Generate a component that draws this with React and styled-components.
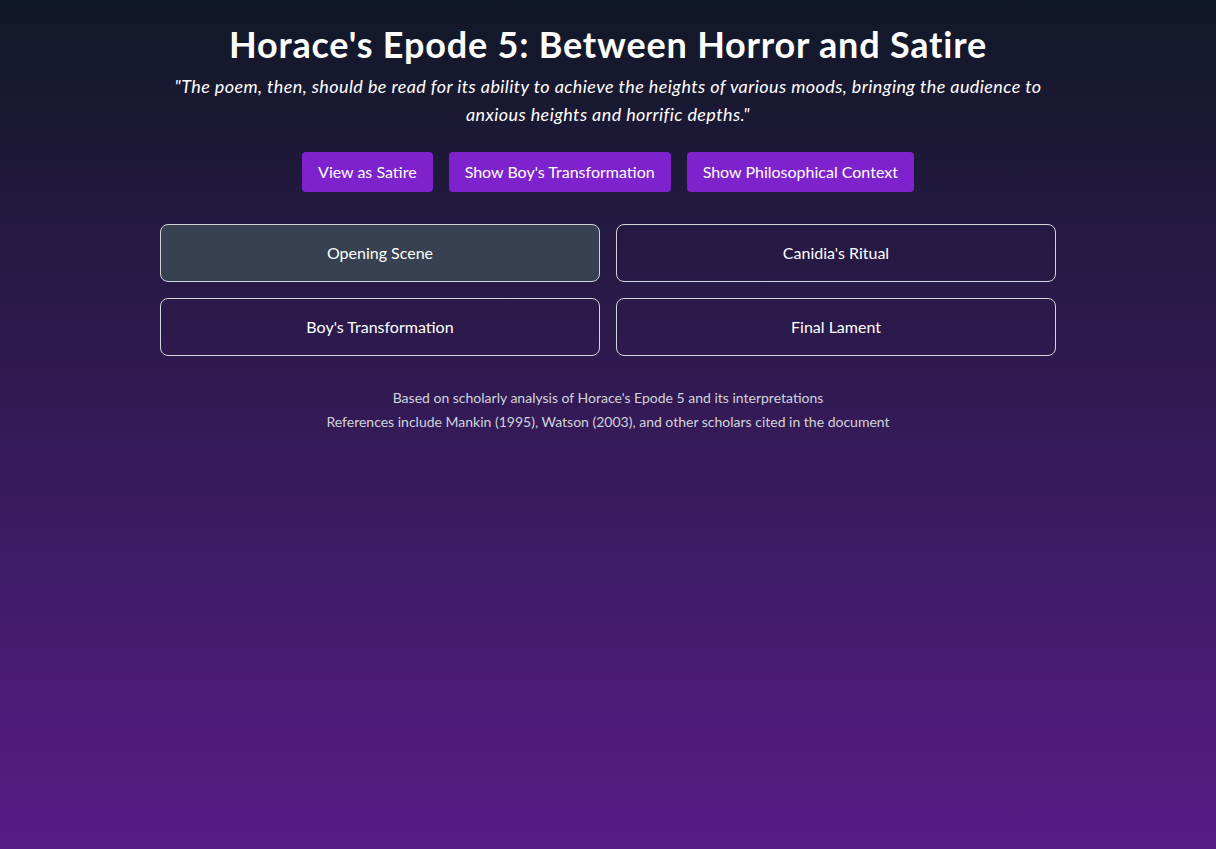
import React, { useState } from "react";
import styled, { createGlobalStyle, css } from "styled-components";

const GlobalStyle = createGlobalStyle`
  * { box-sizing: border-box; }
  html, body { margin: 0; padding: 0; }
  body {
    font-family: "Segoe UI", Lato, "Noto Sans", sans-serif;
    color: #fff;
  }
`;

const Page = styled.div`
  min-height: 100vh;
  background: linear-gradient(to bottom, #111827, #581c87);
  padding: 24px;
`;

const Container = styled.div`
  max-width: 896px;
  margin: 0 auto;
`;

const Title = styled.h1`
  margin: 0 0 8px;
  font-size: 36px;
  line-height: 40px;
  font-weight: 700;
  letter-spacing: 0.8px;
  text-align: center;
`;

const Quote = styled.p`
  margin: 0 0 24px;
  font-size: 18px;
  line-height: 28px;
  font-style: italic;
  letter-spacing: 0.4px;
  text-align: center;
`;

const Toolbar = styled.div`
  display: flex;
  justify-content: center;
  gap: 16px;
  margin-bottom: 32px;
`;

const ActionButton = styled.button`
  height: 40px;
  padding: 8px 16px;
  border: 0;
  border-radius: 4px;
  background: #7e22ce;
  color: #fff;
  font-family: inherit;
  font-size: 16px;
  line-height: 24px;
  cursor: pointer;
`;

const SceneGrid = styled.div`
  display: grid;
  grid-template-columns: 1fr 1fr;
  gap: 16px;
`;

const SceneCard = styled.button`
  padding: 16px;
  border: 1px solid #d1d5db;
  border-radius: 8px;
  background: transparent;
  color: #fff;
  font-family: inherit;
  font-size: 16px;
  line-height: 24px;
  cursor: pointer;
  ${(props) => props.active && css`
    background: #374151;
  `};
`;

const Footer = styled.div`
  margin-top: 32px;
  text-align: center;
  color: #d1d5db;
  font-size: 14px;
  line-height: 20px;
`;

const FooterLine = styled.p`
  margin: 0;
  & + & { margin-top: 4px; }
`;

const scenes = ["Opening Scene", "Canidia's Ritual", "Boy's Transformation", "Final Lament"];

function App() {
  const [active, setActive] = useState(0);

  return (
    <Page>
      <GlobalStyle />
      <Container>
        <Title>Horace's Epode 5: Between Horror and Satire</Title>
        <Quote>
          "The poem, then, should be read for its ability to achieve the heights of various moods, bringing the audience to anxious heights and horrific depths."
        </Quote>

        <Toolbar>
          <ActionButton>View as Satire</ActionButton>
          <ActionButton>Show Boy's Transformation</ActionButton>
          <ActionButton>Show Philosophical Context</ActionButton>
        </Toolbar>

        <SceneGrid>
          {scenes.map((s, i) => (
            <SceneCard key={s} active={i === active} onClick={() => setActive(i)}>
              {s}
            </SceneCard>
          ))}
        </SceneGrid>

        <Footer>
          <FooterLine>Based on scholarly analysis of Horace's Epode 5 and its interpretations</FooterLine>
          <FooterLine>References include Mankin (1995), Watson (2003), and other scholars cited in the document</FooterLine>
        </Footer>
      </Container>
    </Page>
  );
}

export default App;
